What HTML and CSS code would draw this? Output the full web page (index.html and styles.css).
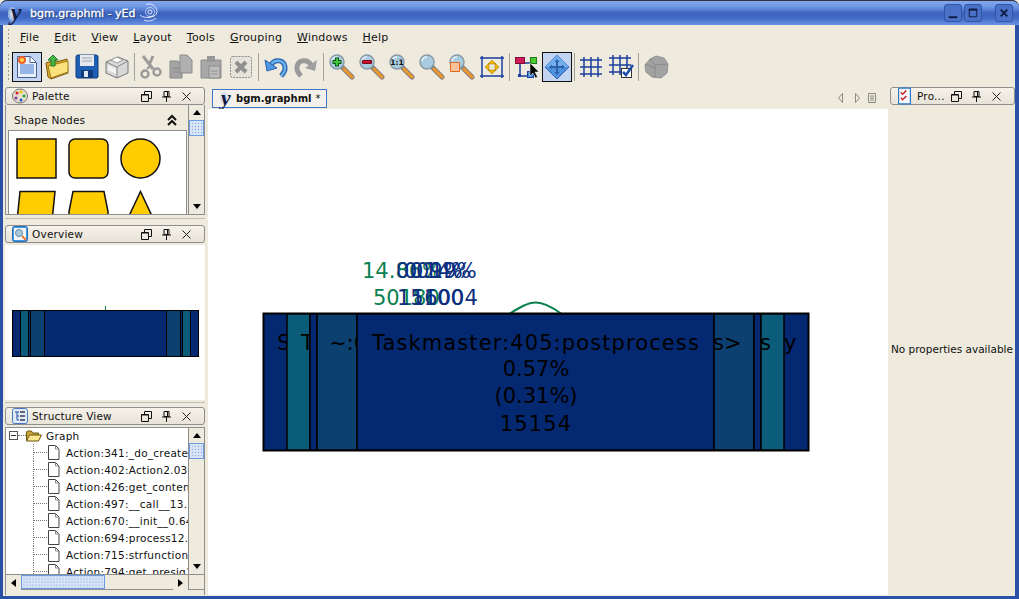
FILE: index.html
```html
<!DOCTYPE html>
<html>
<head>
    <title>bgm.graphml - yEd</title>
    <link rel="stylesheet" href="styles.css">
</head>
<body>
    <svg class="sprites">
        <symbol id="lens" viewBox="0 0 26 26">
            <path d="M13 13l10 10" stroke="#808080" stroke-width="5" stroke-linecap="round"/>
            <path d="M15 15l8 8" stroke="#f0962e" stroke-width="3" stroke-linecap="round"/>
            <circle cx="8" cy="8" r="7" fill="#a9cbe0" stroke="#8a9aa6" stroke-width="1.500"/>
            <path d="M3 7a5 5 0 0 1 5-4" stroke="#e4f2fa" stroke-width="1.500" fill="none"/>
        </symbol>
        <symbol id="restore" viewBox="0 0 11 11">
            <path d="M.5 3.5h7v7h-7zM3.5 3V.5h7v7H8" fill="none" stroke="#111"/>
            <path d="M.5 4h7" stroke="#111"/>
        </symbol>
        <symbol id="pin" viewBox="0 0 11 11">
            <path d="M3 .5h5v5H3zM1 6h9M5.5 6v5M6.5 1v4" fill="none" stroke="#111"/>
        </symbol>
        <symbol id="cross" viewBox="0 0 11 11">
            <path d="M1.5 1.5l8 8M9.5 1.5l-8 8" stroke="#222"/>
        </symbol>
        <symbol id="page" viewBox="0 0 13 17">
            <path d="M1.5 1.5h7l3.500 3.500v10.500h-10.500z" fill="#fff" stroke="#444"/>
            <path d="M8.500 1.500v3.500h3.500" fill="none" stroke="#888"/>
        </symbol>
    </svg>

    <div class="window">
        <div class="titlebar">
            <span class="app-logo">y</span>
            <span class="title">bgm.graphml - yEd</span>
            <svg class="swirl" width="20" height="20" viewBox="0 0 20 20" fill="none" stroke="#dfe8fa">
                <circle cx="11" cy="9" r="2"/>
                <circle cx="11" cy="9" r="4.500" stroke-opacity=".7"/>
                <path d="M7 1.500a8 8 0 0 1 11 7c0 4-5 6-9 5.500M1 12c3 3 9 3 14 1M5 17c4 2 9 1 12-2"/>
            </svg>
            <span class="spacer"></span>
            <span class="win-btn"><svg width="16" height="16" viewBox="0 0 17 17"><path d="M4 13h9" stroke="#0e1c40" stroke-width="2"/></svg></span>
            <span class="win-btn win-max"><svg width="16" height="16" viewBox="0 0 17 17"><path d="M4.500 4.500h8v8h-8z" fill="none" stroke="#0e1c40"/><path d="M4 5h9" stroke="#0e1c40" stroke-width="2"/></svg></span>
            <span class="win-btn win-close"><svg width="16" height="16" viewBox="0 0 17 17"><path d="M5 5l7 7M12 5l-7 7" stroke="#0e1c40" stroke-width="2"/></svg></span>
        </div>

        <div class="menubar">
            <span class="grip"></span>
            <span class="menu"><u>F</u>ile</span>
            <span class="menu"><u>E</u>dit</span>
            <span class="menu"><u>V</u>iew</span>
            <span class="menu"><u>L</u>ayout</span>
            <span class="menu"><u>T</u>ools</span>
            <span class="menu"><u>G</u>rouping</span>
            <span class="menu"><u>W</u>indows</span>
            <span class="menu"><u>H</u>elp</span>
        </div>

        <div class="toolbar">
            <span class="grip"></span>
            <span class="tool active"><svg width="26" height="26" viewBox="0 0 26 26">
                <path d="M3.500 2.500h13l6 6v15h-19z" fill="#e8f0fb" stroke="#46608e"/>
                <path d="M6 10h14v10H6z" fill="#97b4e6"/>
                <path d="M16 2.500v6h6" fill="#fff" stroke="#46608e"/>
                <circle cx="8" cy="6" r="4" fill="#f2602a"/><circle cx="8" cy="6" r="2" fill="#ffd34d"/>
            </svg></span>
            <span class="tool"><svg width="26" height="26" viewBox="0 0 26 26">
                <path d="M2 9l9-3 1 2 11-3 1 14-17 6-3-2z" fill="#dcae2c" stroke="#7a5a10"/>
                <path d="M4 12l20-5 0 11-17 6z" fill="#fbe27c" stroke="#9a7a18"/>
                <path d="M9 1l5 5h-3v6H7V6H4z" fill="#47b548" stroke="#1f7a26"/>
            </svg></span>
            <span class="tool"><svg width="26" height="26" viewBox="0 0 26 26">
                <path d="M2 3a2 2 0 0 1 2-2h18a2 2 0 0 1 2 2v20l-1 1H3l-1-1z" fill="#1d5fb4" stroke="#123c7c"/>
                <path d="M6 1h14v11H6z" fill="#e6e8ec"/>
                <path d="M8 4h10M8 7h10" stroke="#9aa4b4"/>
                <path d="M7 16h12v8H7z" fill="#123c7c"/><path d="M10 17h4v6h-4z" fill="#dfe6f2"/>
            </svg></span>
            <span class="tool"><svg width="26" height="26" viewBox="0 0 26 26">
                <path d="M2 8l12-5 10 4v12l-11 5-11-5z" fill="#d8d8d8" stroke="#777"/>
                <path d="M2 8l11 5 11-6M13 13v11" fill="none" stroke="#888"/>
                <path d="M4 11l8 4v5l-8-4z" fill="#f4f4f4"/>
                <path d="M7 6l6-3 6 3-6 3z" fill="#fff" stroke="#999"/>
            </svg></span>
            <span class="sep sep-narrow"></span>
            <span class="tool"><svg width="26" height="26" viewBox="0 0 26 26" fill="none" stroke="#9c9c9c">
                <path d="M5 2l10 13M15 2L11 11" stroke-width="3"/>
                <circle cx="7" cy="20" r="3.500" stroke-width="2.500"/>
                <circle cx="19" cy="18" r="3.500" stroke-width="2.500"/>
                <path d="M9 15l3-3 4 3" stroke-width="2"/>
            </svg></span>
            <span class="tool"><svg width="26" height="26" viewBox="0 0 26 26">
                <path d="M2 7h8l4 4v13H2z" fill="#a3a3a3" stroke="#8a8a8a"/>
                <path d="M12 1h7l5 5v13H12z" fill="#b0b0b0" stroke="#8a8a8a"/>
                <path d="M5 14h6M5 18h6" stroke="#8a8a8a"/>
            </svg></span>
            <span class="tool"><svg width="26" height="26" viewBox="0 0 26 26">
                <path d="M3 6h20v18H3z" fill="#a8a8a8" stroke="#8c8c8c"/>
                <path d="M9 2h8v6H9z" fill="#979797"/>
                <path d="M11 12h11v12H11z" fill="#bdbdbd" stroke="#8c8c8c"/>
                <path d="M13 17h7M13 20h7" stroke="#949494"/>
            </svg></span>
            <span class="tool"><svg width="26" height="26" viewBox="0 0 26 26">
                <rect x="2.500" y="2.500" width="21" height="21" rx="2" fill="#e6e3da" stroke="#8c8c8c" stroke-dasharray="2 1"/>
                <path d="M8 8l10 10M18 8L8 18" stroke="#909090" stroke-width="4"/>
            </svg></span>
            <span class="sep"></span>
            <span class="tool"><svg width="26" height="26" viewBox="0 0 26 26" fill="none">
                <path d="M8 11C11 5 21 5 22 13c.5 4-2 7-4 9" stroke="#2a62ad" stroke-width="5"/>
                <path d="M8 11C11 5 21 5 22 13c.5 4-2 7-4 9" stroke="#6ab0ec" stroke-width="2.500"/>
                <path d="M2 6l2 11 10-3z" fill="#4f9ae2" stroke="#2a62ad"/>
            </svg></span>
            <span class="tool"><svg width="26" height="26" viewBox="0 0 26 26" fill="none">
                <path d="M18 11C15 5 5 5 4 13c-.5 4 2 7 4 9" stroke="#9a9a9a" stroke-width="5"/>
                <path d="M24 6l-2 11-10-3z" fill="#a0a0a0"/>
            </svg></span>
            <span class="sep sep-wide"></span>
            <span class="tool"><svg width="26" height="26" viewBox="0 0 26 26">
                <use href="#lens"/><path d="M8 3.500v9M3.500 8h9" stroke="#0c5a12" stroke-width="4"/><path d="M8 4.500v7M4.500 8h7" stroke="#3fc63f" stroke-width="2"/>
            </svg></span>
            <span class="tool"><svg width="26" height="26" viewBox="0 0 26 26">
                <use href="#lens"/><path d="M3.500 6.500h9v3h-9z" fill="#c8102e" stroke="#7c0a1c"/>
            </svg></span>
            <span class="tool"><svg width="26" height="26" viewBox="0 0 26 26">
                <use href="#lens"/><text class="one-one" x="8" y="10.500" text-anchor="middle">1:1</text>
            </svg></span>
            <span class="tool"><svg width="26" height="26" viewBox="0 0 26 26"><use href="#lens"/></svg></span>
            <span class="tool"><svg width="26" height="26" viewBox="0 0 26 26">
                <use href="#lens"/>
                <path d="M1.500 8.500h9v9h-9z" fill="#f7c39a" stroke="#e06a20"/>
            </svg></span>
            <span class="tool"><svg width="26" height="26" viewBox="0 0 26 26">
                <path d="M3 2v22M23 2v22M1 4h24M1 22h24" stroke="#1b3f9c" stroke-width="1.500"/>
                <path d="M13 6l4 4H9zM13 20l4-4H9zM6 13l4-4v8zM20 13l-4-4v8z" fill="#f0b400" stroke="#a07a00" stroke-width=".5"/>
            </svg></span>
            <span class="sep"></span>
            <span class="tool"><svg width="26" height="26" viewBox="0 0 26 26">
                <path d="M6 9v13h9M6 9h14" fill="none" stroke="#1b3f9c" stroke-width="1.500"/>
                <rect x="1.500" y="3.500" width="9" height="6" fill="#d01a5a" stroke="#7c0e34"/>
                <rect x="16.500" y="3.500" width="6" height="6" fill="#4cc92f" stroke="#1f7a16"/>
                <rect x="13.500" y="17.500" width="6" height="6" fill="#4d8fd8" stroke="#1b3f9c"/>
                <rect x="4" y="20" width="3" height="3" fill="#1b3f9c"/>
                <path d="M16 9v13l3-3 2.500 5 2-1-2.500-5h4z" fill="#000" stroke="#fff" stroke-width=".5"/>
            </svg></span>
            <span class="tool active"><svg width="26" height="26" viewBox="0 0 26 26">
                <path d="M13 1l12 12-12 12L1 13z" fill="#4f93e0" stroke="#2f62aa"/>
                <path d="M13 1l12 12H1z" fill="#75b0ee"/>
                <path d="M13 5l2.500 3h-5zM13 21l2.500-3h-5zM5 13l3-2.500v5zM21 13l-3-2.500v5zM12 8h2v10h-2zM8 12h10v2H8z" fill="#2f62aa"/>
            </svg></span>
            <span class="sep sep-narrow"></span>
            <span class="tool"><svg width="26" height="26" viewBox="0 0 26 26">
                <path d="M6 3v20M13 3v20M20 3v20M2 6h22M2 13h22M2 20h22" stroke="#1b3f9c" stroke-width="1.500"/>
            </svg></span>
            <span class="tool"><svg width="26" height="26" viewBox="0 0 26 26">
                <path d="M5 1v20M12 1v20M19 1v14M1 4h22M1 11h22M1 18h13" stroke="#1b3f9c" stroke-width="1.500"/>
                <rect x="13.500" y="14.500" width="10" height="9" fill="#fff" stroke="#333"/>
                <path d="M15 18l3 3 7-10" fill="none" stroke="#1b4fa8" stroke-width="2.500"/>
            </svg></span>
            <span class="sep sep-wide"></span>
            <span class="tool"><svg width="26" height="26" viewBox="0 0 26 26">
                <path d="M6 5l6-3 8 2 4 6-1 9-6 5-9-1-6-5-1-7z" fill="#a2a2a2" stroke="#929292"/>
                <path d="M6 5l5 6 12-1M11 11v12M1 10l10 4" fill="none" stroke="#8a8a8a"/>
            </svg></span>
        </div>

        <div class="main">
            <div class="left-col">
                <div class="dock-title">
                    <svg class="dock-icon" width="16" height="16" viewBox="0 0 16 16">
                        <ellipse cx="8" cy="8" rx="7.500" ry="7" fill="#e8e0cc" stroke="#777"/>
                        <circle cx="5" cy="5" r="1.500" fill="#d02020"/><circle cx="9" cy="4" r="1.500" fill="#f0c000"/>
                        <circle cx="12" cy="8" r="1.500" fill="#20a040"/><circle cx="9" cy="12" r="1.500" fill="#2050d0"/><circle cx="4" cy="10" r="1.500" fill="#8030b0"/>
                    </svg>
                    <span class="dock-name">Palette</span>
                    <svg class="dock-btn"><use href="#restore"/></svg>
                    <svg class="dock-btn"><use href="#pin"/></svg>
                    <svg class="dock-btn"><use href="#cross"/></svg>
                </div>
                <div class="palette">
                    <div class="palette-body">
                        <div class="section-head">
                            <span>Shape Nodes</span>
                            <svg width="10" height="12" viewBox="0 0 10 12" fill="none" stroke="#111" stroke-width="2"><path d="M1 6l4-4 4 4M1 11l4-4 4 4"/></svg>
                        </div>
                        <svg class="shapes" width="177" height="83" viewBox="8 131 177 83">
                            <g fill="#ffcc00" stroke="#111" stroke-width="1.500">
                                <rect x="16" y="139" width="39" height="39"/>
                                <rect x="68" y="139" width="39" height="39" rx="6"/>
                                <circle cx="139.500" cy="158.500" r="19.500"/>
                                <path d="M19 191.500h35l-3 30H16z"/>
                                <path d="M72 191.500h31l4 20v12H68v-12z"/>
                                <path d="M139.500 191.500l15 32h-30z"/>
                            </g>
                        </svg>
                    </div>
                    <div class="vscroll">
                        <span class="arrow-btn"><span class="tri tri-up"></span></span>
                        <span class="thumb-v"></span>
                        <span class="track"></span>
                        <span class="arrow-btn"><span class="tri tri-down"></span></span>
                    </div>
                </div>
                <div class="splitter"></div>
                <div class="dock-title">
                    <svg class="dock-icon" width="16" height="16" viewBox="0 0 16 16">
                        <rect x=".5" y=".5" width="15" height="15" rx="2" fill="#3d9be8" stroke="#2a6cb4"/>
                        <rect x="2" y="2" width="12" height="12" fill="#f2f6fa"/>
                        <circle cx="7" cy="7" r="3.500" fill="#a9cbe0" stroke="#6a8aa0"/>
                        <path d="M10 10l4 4" stroke="#f0762e" stroke-width="2"/>
                    </svg>
                    <span class="dock-name">Overview</span>
                    <svg class="dock-btn"><use href="#restore"/></svg>
                    <svg class="dock-btn"><use href="#pin"/></svg>
                    <svg class="dock-btn"><use href="#cross"/></svg>
                </div>
                <svg class="overview" width="200" height="155" viewBox="5 245 200 155">
                    <path d="M105.500 306v4" stroke="#0b8050"/>
                    <rect x="12.500" y="310.500" width="186" height="46" fill="#052971" stroke="#000"/>
                    <g stroke="#000" stroke-width="1">
                        <rect class="teal" x="20.500" y="310.500" width="8" height="46"/>
                        <rect class="mid" x="30.500" y="310.500" width="14" height="46"/>
                        <rect class="mid" x="166.500" y="310.500" width="14" height="46"/>
                        <rect class="teal" x="182.500" y="310.500" width="8" height="46"/>
                    </g>
                </svg>
                <div class="splitter splitter-small"></div>
                <div class="dock-title">
                    <svg class="dock-icon" width="16" height="16" viewBox="0 0 16 16">
                        <rect x=".5" y=".5" width="15" height="15" rx="2" fill="#dfe8f6" stroke="#4a78c0"/>
                        <path d="M3 4h4M5 4v8h2M5 8h2" fill="none" stroke="#2050a0"/>
                        <path d="M8 3h5v2H8zM8 7h5v2H8zM8 11h5v2H8z" fill="#667"/>
                    </svg>
                    <span class="dock-name">Structure View</span>
                    <svg class="dock-btn"><use href="#restore"/></svg>
                    <svg class="dock-btn"><use href="#pin"/></svg>
                    <svg class="dock-btn"><use href="#cross"/></svg>
                </div>
                <div class="structure">
                    <div class="tree-top">
                        <div class="tree">
                            <div class="tree-row tree-root">
                                <span class="minus"></span>
                                <span class="root-dots"></span>
                                <svg width="16" height="12" viewBox="0 0 16 12">
                                    <path d="M.5 11V2l1-1h4l1 2h6v2" fill="#c9a63a" stroke="#6a5410"/>
                                    <path d="M.5 11l3-6h12l-3 6z" fill="#fbe68e" stroke="#6a5410"/>
                                </svg>
                                <span>Graph</span>
                            </div>
                            <div class="tree-row"><span class="branch"></span><svg class="leaf"><use href="#page"/></svg><span>Action:341:_do_create_</span></div>
                            <div class="tree-row"><span class="branch"></span><svg class="leaf"><use href="#page"/></svg><span>Action:402:Action2.039</span></div>
                            <div class="tree-row"><span class="branch"></span><svg class="leaf"><use href="#page"/></svg><span>Action:426:get_content</span></div>
                            <div class="tree-row"><span class="branch"></span><svg class="leaf"><use href="#page"/></svg><span>Action:497:__call__13.</span></div>
                            <div class="tree-row"><span class="branch"></span><svg class="leaf"><use href="#page"/></svg><span>Action:670:__init__0.64</span></div>
                            <div class="tree-row"><span class="branch"></span><svg class="leaf"><use href="#page"/></svg><span>Action:694:process12.</span></div>
                            <div class="tree-row"><span class="branch"></span><svg class="leaf"><use href="#page"/></svg><span>Action:715:strfunction</span></div>
                            <div class="tree-row"><span class="branch"></span><svg class="leaf"><use href="#page"/></svg><span>Action:794:get_presig1</span></div>
                        </div>
                        <div class="vscroll vscroll-tree">
                            <span class="arrow-btn"><span class="tri tri-up"></span></span>
                            <span class="thumb-v"></span>
                            <span class="track"></span>
                            <span class="arrow-btn"><span class="tri tri-down"></span></span>
                        </div>
                    </div>
                    <div class="hscroll">
                        <span class="arrow-btn"><span class="tri tri-left"></span></span>
                        <span class="thumb-h"></span>
                        <span class="track"></span>
                        <span class="arrow-btn"><span class="tri tri-right"></span></span>
                        <span class="corner"></span>
                    </div>
                </div>
            </div>

            <div class="center-col">
                <div class="tabbar">
                    <div class="tab">
                        <span class="tab-logo">y</span>
                        <b>bgm.graphml</b>
                        <span class="tab-dirty">*</span>
                    </div>
                    <span class="spacer"></span>
                    <svg class="tab-nav" width="44" height="12" viewBox="0 0 44 12" fill="none" stroke="#8a8a80">
                        <path d="M6.500 1.500v9l-4-4.500zM19.500 1.500v9l4-4.500z"/>
                        <path d="M32.500 1.500h7v9h-7zM34 4h4M34 6h4M34 8h4"/>
                    </svg>
                </div>
                <svg class="canvas" width="680" height="486" viewBox="208 109 680 486">
                    <path d="M510 313.500c8-5 17-11 26-11s18 6 25 11" fill="none" stroke="#0b8050" stroke-width="2"/>
                    <g class="edge-labels">
                        <text class="green" x="362" y="278">14.86%</text>
                        <text class="blue" x="396" y="278">0.09%</text>
                        <text class="blue" x="404" y="278">0.14%</text>
                        <text class="blue" x="410" y="278">0.19%</text>
                        <text class="green" x="373" y="305">50180</text>
                        <text class="blue" x="397" y="305">15100</text>
                        <text class="blue" x="411" y="305">16004</text>
                    </g>
                    <rect x="263.500" y="313.500" width="545" height="137" fill="#052971" stroke="#000" stroke-width="2"/>
                    <g class="node-label">
                        <text x="277" y="350">S</text>
                    </g>
                    <rect class="teal cell" x="287" y="314" width="23" height="136"/>
                    <g class="node-label">
                        <text x="301" y="350">T</text>
                    </g>
                    <rect class="navy cell" x="310" y="314" width="7" height="136"/>
                    <rect class="mid cell" x="317" y="314" width="40" height="136"/>
                    <g class="node-label">
                        <text x="329" y="350">~:0</text>
                    </g>
                    <rect class="navy cell" x="357" y="314" width="357" height="136"/>
                    <rect class="mid cell" x="714" y="314" width="40" height="136"/>
                    <rect class="navy cell" x="754" y="314" width="7" height="136"/>
                    <rect class="teal cell" x="761" y="314" width="23" height="136"/>
                    <g class="node-label">
                        <text x="713" y="350">s&gt;</text>
                        <text x="760" y="350">s</text>
                        <text x="784" y="350">y</text>
                        <text class="mid-text spaced" x="536" y="350">Taskmaster:405:postprocess</text>
                        <text class="mid-text" x="536" y="376">0.57%</text>
                        <text class="mid-text" x="536" y="403">(0.31%)</text>
                        <text class="mid-text spaced" x="536" y="431">15154</text>
                    </g>
                </svg>
            </div>

            <div class="right-col">
                <div class="dock-title dock-title-props">
                    <svg class="dock-icon" width="13" height="18" viewBox="0 0 14 18">
                        <rect x=".5" y=".5" width="13" height="17" rx="1" fill="#f4f6fa" stroke="#2a78c8" stroke-width="1.500"/>
                        <path d="M3 5l2 2 4-4M3 11l2 2 4-4" fill="none" stroke="#d02020" stroke-width="1.500"/>
                    </svg>
                    <span class="dock-name">Pro...</span>
                    <svg class="dock-btn"><use href="#restore"/></svg>
                    <svg class="dock-btn"><use href="#pin"/></svg>
                    <svg class="dock-btn"><use href="#cross"/></svg>
                </div>
                <div class="no-props">No properties available</div>
            </div>
        </div>
    </div>
</body>
</html>
```

FILE: styles.css
```css
* { box-sizing: border-box; }
html, body { margin: 0; height: 100%; overflow: hidden; }
body { font-family: "DejaVu Sans", sans-serif; font-size: 10.5px; color: #111; background: #eeeade; }
svg { display: block; flex: none; }
.sprites { display: none; }
.spacer { flex: 1; }

.window { width: 1019px; height: 599px; display: flex; flex-direction: column; background: #eeeade; border: solid #2b51a6; border-width: 0 4px 3px 3px; border-radius: 7px 7px 0 0; }

.titlebar { height: 25px; margin: 0 -4px 0 -3px; padding: 0 6px 0 7px; display: flex; align-items: center; border-top: 1px solid #33353c; border-radius: 7px 7px 0 0; background: linear-gradient(#84a8ee, #6e96e6 25%, #3d64bd 50%, #3f69c4 70%, #6a93e4); }
.app-logo { width: 18px; height: 22px; font: italic bold 24px/20px "Liberation Serif", serif; color: #101a40; text-align: center; background: radial-gradient(ellipse 5px 9px at 5px 12px, #dce8fa, #86a6de 80%, transparent 85%); }
.title { margin-left: 5px; color: #fff; font-size: 11px; -webkit-text-stroke: .3px #fff; text-shadow: 1px 1px 1px #20386f; }
.swirl { margin-left: 3px; }
.win-btn { width: 18px; height: 18px; border: 1px solid #2e55a8; border-radius: 3px; background: #4a70c8; margin-left: 2px; }
.win-close { margin-left: 13px; }

.menubar { height: 25px; display: flex; align-items: center; padding-left: 4px; font-size: 11px; letter-spacing: .2px; }
.menu { margin-left: 15px; }
.menubar .menu:nth-child(2) { margin-left: 10px; }
.grip { width: 3px; height: 20px; background: radial-gradient(circle, #9c9c92 1px, transparent 1px) 0 0 / 3px 4px; }

.toolbar { height: 34px; display: flex; align-items: center; padding-left: 4px; }
.toolbar .grip { margin-right: 2px; height: 28px; }
.tool { width: 30px; height: 30px; display: flex; align-items: center; justify-content: center; border: 1px solid transparent; }
.active { background: #c3d4f2; border-color: #111; }
.sep { width: 5px; height: 28px; display: flex; }
.sep::before { content: ""; width: 1px; margin-left: 2px; background: #a2a29c; }
.sep-wide { width: 6px; }
.sep-narrow { width: 4px; }

.main { flex: 1; min-height: 0; display: flex; padding: 3px 0 1px 2px; }
.left-col { width: 200px; display: flex; flex-direction: column; }
.center-col { width: 680px; margin: -3px 0 0 3px; display: flex; flex-direction: column; }
.right-col { width: 125px; margin-left: 2px; display: flex; flex-direction: column; }

.dock-title { height: 18px; flex: none; display: flex; align-items: center; padding-left: 6px; border: 1px solid #8e8e8e; border-radius: 3px; background: linear-gradient(#f7f2ea, #e8e3d8); }
.dock-title-props { padding-left: 7px; }
.dock-title-props .dock-icon { margin-right: 6px; }
.dock-icon { margin-right: 4px; }
.dock-name { flex: 1; font-size: 10.5px; letter-spacing: .2px; overflow: hidden; white-space: nowrap; }
.dock-btn { width: 11px; height: 11px; margin-right: 9px; }
.dock-btn:last-child { margin-right: 12px; }

.palette { height: 110px; display: flex; border: solid #8e8e8e; border-width: 0 1px 1px 1px; }
.palette-body { flex: 1; padding: 0 2px; min-width: 0; }
.section-head { height: 26px; padding: 4px 9px 0 6px; display: flex; align-items: center; justify-content: space-between; font-size: 10.5px; letter-spacing: .2px; }
.shapes { background: #fff; border: solid #8e8e8e; border-width: 1px 1px 0; box-sizing: content-box; margin-top: -1px; }

.vscroll { width: 16px; flex: none; display: flex; flex-direction: column; border-left: 1px solid #8e8e8e; }
.arrow-btn { width: 15px; height: 15px; flex: none; display: flex; align-items: center; justify-content: center; background: #eeeade; }
.thumb-v { height: 16px; flex: none; border: 1px solid #6b9be0; background: radial-gradient(circle, #7ea6de 1px, transparent 1px) 1px 1px / 3px 3px, #d8e4f6; }
.track { flex: 1; background: #eeeade; }
.tri { width: 0; height: 0; border: 4px solid transparent; }
.tri-up { border-bottom: 5px solid #000; border-top-width: 0; }
.tri-down { border-top: 5px solid #000; border-bottom-width: 0; }
.tri-left { border-right: 5px solid #000; border-left-width: 0; }
.tri-right { border-left: 5px solid #000; border-right-width: 0; }

.splitter { height: 10px; flex: none; padding-top: 3px; }
.splitter::before { content: ""; display: block; height: 1px; background: #bcbcb2; }
.splitter-small { height: 7px; padding-top: 2px; }

.overview { margin-top: 2px; background: #fff; height: 155px; }
.teal { fill: #0a5c78; }
.mid { fill: #0c4070; }
.navy { fill: #052971; }
.cell { stroke: #000; stroke-width: 1.500; }

.structure { flex: 1; min-height: 0; margin-top: 2px; display: flex; flex-direction: column; border: solid #8e8e8e; border-width: 1px 1px 0 1px; }
.tree-top { height: 146px; display: flex; }
.tree { flex: 1; min-width: 0; overflow: hidden; background: #fff; }
.tree-row { height: 17px; display: flex; align-items: center; white-space: nowrap; font-size: 10.5px; letter-spacing: .25px; }
.tree-root { padding-left: 3px; margin-top: -1px; }
.minus { width: 9px; height: 9px; flex: none; border: 1px solid #555; background: linear-gradient(#333, #333) center / 5px 1px no-repeat #fff; }
.root-dots { width: 8px; flex: none; border-top: 1px dotted #777; }
.tree-root span:last-child { margin-left: 4px; }
.branch { width: 14px; height: 17px; flex: none; margin-left: 27px; border-left: 1px dotted #777; display: flex; align-items: center; }
.branch::after { content: ""; flex: 1; border-top: 1px dotted #777; }
.leaf { width: 13px; height: 17px; margin-right: 6px; }

.hscroll { height: 16px; flex: none; display: flex; border-top: 1px solid #8e8e8e; border-bottom: 1px solid #8e8e8e; }
.thumb-h { width: 84px; flex: none; border: 1px solid #6b9be0; background: radial-gradient(circle, #7ea6de 1px, transparent 1px) center / 3px 3px, #d8e4f6; }
.corner { width: 16px; flex: none; border-left: 1px solid #8e8e8e; background: #eeeade; }

.tabbar { height: 25px; flex: none; display: flex; align-items: center; padding: 3px 8px 0 4px; }
.tab { width: 115px; height: 19px; display: flex; align-items: center; padding-left: 6px; border: 1px solid #3f76c8; background: #f4f1ea; }
.tab b { margin-left: 3px; font-size: 10px; }
.tab-logo { width: 14px; font: italic bold 22px/18px "Liberation Serif", serif; color: #101a40; text-align: center; background: radial-gradient(ellipse 5px 8px at 5px 9px, #a8c0e8, transparent 95%); }
.tab-dirty { margin-left: 4px; font-size: 10px; }
.canvas { background: #fff; }
.one-one { font: bold 7.500px "DejaVu Sans", sans-serif; fill: #111; }

.edge-labels text, .node-label text { font-family: "DejaVu Sans", sans-serif; font-size: 21px; }
.green { fill: #0b8050; }
.blue { fill: #0c2f80; }
.node-label text { fill: #000; }
.mid-text { text-anchor: middle; }
.spaced { letter-spacing: 1.1px; }

.no-props { flex: 1; display: flex; align-items: center; padding: 0 0 3px 1px; white-space: nowrap; overflow: hidden; font-size: 10.5px; }
```
